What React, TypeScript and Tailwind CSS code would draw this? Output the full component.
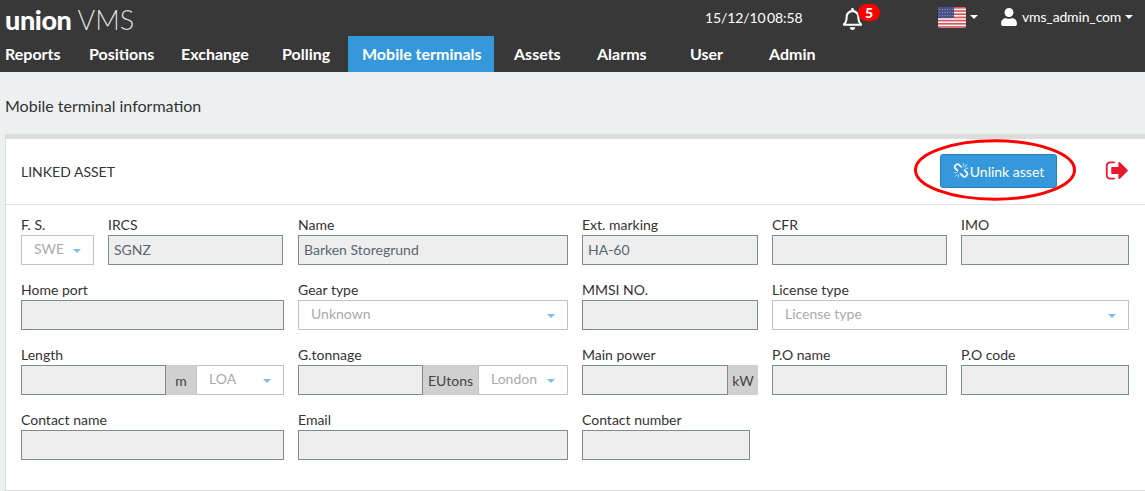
import React from "react";
import { FaRegBell, FaUser } from "react-icons/fa";

const nav = [
  { label: "Reports", cls: "w-[75px] pl-[5px]" },
  { label: "Positions", cls: "w-[106px] pl-[14px]" },
  { label: "Exchange", cls: "w-[101px]" },
  { label: "Polling", cls: "w-[66px]" },
  { label: "Mobile terminals", cls: "w-[146px] pl-[14px] bg-[#3498db]" },
  { label: "Assets", cls: "w-[83px] pl-[20px]" },
  { label: "Alarms", cls: "w-[113px] pl-[20px]" },
  { label: "User", cls: "w-[79px]" },
  { label: "Admin", cls: "w-[80px]" },
];

function Caret({ className }: { className: string }) {
  return <span className={`inline-block w-0 h-0 border-x-[4px] border-x-transparent border-t-[4px] ${className}`} />;
}

function Field({ label, className, children }: { label: string; className: string; children: React.ReactNode }) {
  return (
    <div className={className}>
      <div className="h-[20px] text-[14px] leading-[20px] text-[#333]">{label}</div>
      <div className="flex h-[30px]">{children}</div>
    </div>
  );
}

function Input({ value = "" }: { value?: string }) {
  return (
    <div className="flex-1 min-w-0 h-[30px] bg-[#eeeeee] border border-[#7f8c8d] px-[5px] text-[14px] leading-[28px] text-[#5a6670]">
      {value}
    </div>
  );
}

function Select({ value, className }: { value: string; className: string }) {
  return (
    <div className={`h-[30px] bg-white border border-[#bdc3c7] flex items-center justify-between text-[14px] text-[#aaaaaa] px-[12px] ${className}`}>
      <span className="-mt-[3px]">{value}</span>
      <Caret className="border-t-[#7fbce8] mt-[2px]" />
    </div>
  );
}

function Addon({ children, className }: { children: React.ReactNode; className: string }) {
  return (
    <div className={`h-[30px] bg-[#d0d0d0] flex items-center justify-center text-[14px] text-[#444] ${className}`}>
      {children}
    </div>
  );
}

function Flag() {
  const stripes = [0, 1, 2, 3, 4, 5, 6];
  const stars = [1.5, 4, 6.5, 9, 11.5, 14];
  return (
    <svg width="28" height="21" viewBox="0 0 28 21" className="block">
      <clipPath id="flag-clip">
        <rect width="28" height="21" rx="3" />
      </clipPath>
      <g clipPath="url(#flag-clip)">
        <rect width="28" height="21" fill="#f3eeee" />
        {stripes.map((i) => (
          <rect key={i} y={i * 3.2} width="28" height="1.6" fill="#d4565e" />
        ))}
        <rect width="16" height="11" fill="#46518c" />
        {[2, 5, 8].map((y) =>
          stars.map((x) => <rect key={`${x}-${y}`} x={x} y={y} width="1" height="1" fill="#8d94bb" />)
        )}
      </g>
    </svg>
  );
}

function ChainBroken({ className }: { className: string }) {
  return (
    <svg viewBox="0 0 1792 1792" fill="currentColor" className={className}>
      <path d="M503 1271l-256 256q-10 9-23 9-12 0-23-9-9-10-9-23t9-23l256-256q10-9 23-9t23 9q9 10 9 23t-9 23zm169 41v320q0 14-9 23t-23 9-23-9-9-23v-320q0-14 9-23t23-9 23 9 9 23zm-224-224q0 14-9 23t-23 9h-320q-14 0-23-9t-9-23 9-23 23-9h320q14 0 23 9t9 23zm1264 128q0 120-85 203l-147 146q-83 83-203 83-121 0-204-85l-334-335q-21-21-42-56l239-18 273 274q27 27 68 27.5t68-26.5l147-146q28-28 28-67 0-40-28-68l-274-275 18-239q35 21 56 42l336 336q84 86 84 204zm-617-724l-239 18-273-274q-28-28-68-28-39 0-68 27l-147 146q-28 28-28 67 0 40 28 68l274 274-18 240q-35-21-56-42l-336-336q-84-86-84-204 0-120 85-203l147-146q83-83 203-83 121 0 204 85l334 335q21 21 42 56zm633 84q0 14-9 23t-23 9h-320q-14 0-23-9t-9-23 9-23 23-9h320q14 0 23 9t9 23zm-544-544v320q0 14-9 23t-23 9-23-9-9-23v-320q0-14 9-23t23-9 23 9 9 23zm407 151l-256 256q-11 9-23 9t-23-9q-9-10-9-23t9-23l256-256q10-9 23-9t23 9q9 10 9 23t-9 23z" />
    </svg>
  );
}

function SignOut({ className }: { className: string }) {
  return (
    <svg viewBox="0 0 1792 1792" fill="currentColor" className={className}>
      <path d="M704 1440q0 4 1 20t.5 26.5-3 23.5-10 19.5-20.5 6.5h-320q-119 0-203.5-84.5t-84.5-203.5v-704q0-119 84.5-203.5t203.5-84.5h320q13 0 22.5 9.5t9.5 22.5q0 4 1 20t.5 26.5-3 23.5-10 19.5-20.5 6.5h-320q-66 0-113 47t-47 113v704q0 66 47 113t113 47h312l11.5 1 11.5 3 8 5.5 7 9 2 13.5zm928-544q0 26-19 45l-544 544q-19 19-45 19t-45-19-19-45v-288h-448q-26 0-45-19t-19-45v-384q0-26 19-45t45-19h448v-288q0-26 19-45t45-19 45 19l544 544q19 19 19 45z" />
    </svg>
  );
}

export default function App() {
  return (
    <div className="w-[1145px] h-[491px] overflow-hidden bg-[#ecf0f1] font-['Lato','Noto_Sans',sans-serif] relative">
      <header className="bg-[#383838] h-[72px] text-white">
        <div className="h-[36px] flex items-center relative">
          <div className="w-[700px] pl-[5px] flex items-baseline h-[36px] leading-[39px]">
            <span className="text-[27px] font-black tracking-[-0.4px]">union</span>
            <span className="text-[27px] font-light text-[#dddddd] ml-[6px]">VMS</span>
          </div>
          <div className="w-[130px] pl-[5px] text-[14px] leading-[38px] [word-spacing:-2px] tracking-[-0.1px]">15/12/10 08:58</div>
          <div className="relative w-[95px] pl-[12px] pt-[1px]">
            <FaRegBell className="w-[21px] h-[22px] text-white" />
            <span className="absolute left-[28px] -top-[3px] w-[22px] h-[17px] rounded-full bg-[#ff0000] text-white text-[14px] font-black leading-[17px] text-center">5</span>
          </div>
          <div className="w-[64px] flex items-center gap-[4px] pl-[13px] -mt-[2px]">
            <Flag />
            <Caret className="border-t-white" />
          </div>
          <div className="flex items-center text-[14px] pl-[12px] -mt-[3px] tracking-[-0.15px]">
            <FaUser className="w-[16px] h-[18px] mr-[5px]" />
            <span>vms_admin_com</span>
            <Caret className="border-t-white ml-[4px]" />
          </div>
        </div>
        <nav className="h-[36px] flex">
          {nav.map((n) => (
            <div key={n.label} className={`h-[36px] text-[16px] font-bold leading-[35px] whitespace-nowrap ${n.cls}`}>
              {n.label}
            </div>
          ))}
        </nav>
      </header>

      <div className="h-[62px] pl-[5px] text-[16px] leading-[68px] text-[#333]">Mobile terminal information</div>

      <section className="ml-[5px] h-[357px] bg-white border-t-[5px] border-t-[#dddddd] border-b border-b-[#dddddd] border-l border-l-[#dddddd]">
        <div className="h-[66px] border-b border-[#dddddd] flex items-center pl-[15px]">
          <div className="text-[14px] text-[#333] flex-1 -mt-[1px]">LINKED ASSET</div>
          <button className="w-[117px] h-[34px] bg-[#3498db] border border-[#2a80b9] rounded-[3px] text-white text-[14px] flex items-center justify-center gap-[1px] mr-[48px] -mt-[1px]">
            <ChainBroken className="w-[16px] h-[16px]" />
            Unlink asset
          </button>
          <SignOut className="w-[25px] h-[25px] text-[#e8182c] mr-[15px] -mt-[3px]" />
        </div>
        <div className="pl-[15px] pt-[10px] flex flex-col gap-[15px]">
          <div className="flex gap-[14px]">
            <div className="w-[263px] flex gap-[14px]">
              <Field label="F. S." className="w-[73px]"><Select value="SWE" className="w-full" /></Field>
              <Field label="IRCS" className="w-[175px]"><Input value="SGNZ" /></Field>
            </div>
            <Field label="Name" className="w-[270px]"><Input value="Barken Storegrund" /></Field>
            <Field label="Ext. marking" className="w-[176px]"><Input value="HA-60" /></Field>
            <Field label="CFR" className="w-[175px]"><Input /></Field>
            <Field label="IMO" className="w-[168px]"><Input /></Field>
          </div>
          <div className="flex gap-[14px]">
            <Field label="Home port" className="w-[263px]"><Input /></Field>
            <Field label="Gear type" className="w-[270px]"><Select value="Unknown" className="w-full" /></Field>
            <Field label="MMSI NO." className="w-[176px]"><Input /></Field>
            <Field label="License type" className="w-[357px]"><Select value="License type" className="w-full" /></Field>
          </div>
          <div className="flex gap-[14px]">
            <Field label="Length" className="w-[263px]">
              <Input />
              <Addon className="w-[30px]">m</Addon>
              <Select value="LOA" className="w-[88px]" />
            </Field>
            <Field label="G.tonnage" className="w-[270px]">
              <Input />
              <Addon className="w-[55px]">EUtons</Addon>
              <Select value="London" className="w-[90px]" />
            </Field>
            <Field label="Main power" className="w-[176px]">
              <Input />
              <Addon className="w-[30px]">kW</Addon>
            </Field>
            <Field label="P.O name" className="w-[175px]"><Input /></Field>
            <Field label="P.O code" className="w-[168px]"><Input /></Field>
          </div>
          <div className="flex gap-[14px]">
            <Field label="Contact name" className="w-[263px]"><Input /></Field>
            <Field label="Email" className="w-[270px]"><Input /></Field>
            <Field label="Contact number" className="w-[168px]"><Input /></Field>
          </div>
        </div>
      </section>

      <svg width="164" height="64" viewBox="0 0 164 64" className="absolute left-[913px] top-[139px]" fill="none">
        <ellipse cx="82" cy="31" rx="79.5" ry="29.2" stroke="#ff0000" strokeWidth="3" />
      </svg>
    </div>
  );
}
